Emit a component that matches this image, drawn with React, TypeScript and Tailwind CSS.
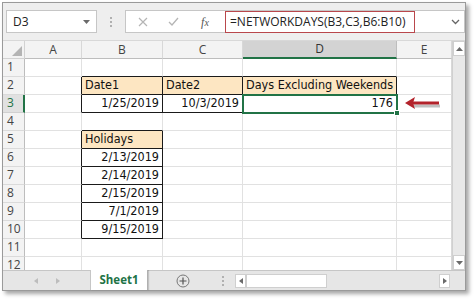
import React from "react";

const ui = { fontFamily: '"Open Sans", "Noto Sans", sans-serif' };
const cellFont = { fontFamily: '"DejaVu Sans Condensed", "DejaVu Sans", sans-serif' };

type Cell = {
  text?: string;
  align?: "left" | "right";
  fill?: boolean;
  r?: boolean; // black right border
  b?: boolean; // black bottom border
};

const rowsData: Record<number, Record<string, Cell>> = {
  1: { B: { b: true }, C: { b: true }, D: { b: true } },
  2: {
    A: { r: true },
    B: { text: "Date1", fill: true, r: true, b: true },
    C: { text: "Date2", fill: true, r: true, b: true },
    D: { text: "Days Excluding Weekends", fill: true, r: true, b: true },
  },
  3: {
    A: { r: true },
    B: { text: "1/25/2019", align: "right", r: true, b: true },
    C: { text: "10/3/2019", align: "right", r: true, b: true },
    D: { text: "176", align: "right", r: true, b: true },
  },
  4: { B: { b: true } },
  5: { A: { r: true }, B: { text: "Holidays", fill: true, r: true, b: true } },
  6: { A: { r: true }, B: { text: "2/13/2019", align: "right", r: true, b: true } },
  7: { A: { r: true }, B: { text: "2/14/2019", align: "right", r: true, b: true } },
  8: { A: { r: true }, B: { text: "2/15/2019", align: "right", r: true, b: true } },
  9: { A: { r: true }, B: { text: "7/1/2019", align: "right", r: true, b: true } },
  10: { A: { r: true }, B: { text: "9/15/2019", align: "right", r: true, b: true } },
};

const cols = ["A", "B", "C", "D", "E"];

function DataCell({ c, last }: { c: Cell; last?: boolean }) {
  return (
    <div
      className={`h-[18px] border-b border-r px-[3px] flex items-center overflow-visible whitespace-nowrap text-[12.5px] leading-none text-[#111] ${
        c.fill ? "bg-[#fde6c2]" : "bg-white"
      } ${c.r ? "border-r-[#1a1a1a]" : last ? "border-r-[#d8d8d8]" : "border-r-[#e1e1e1]"} ${
        c.b ? "border-b-[#1a1a1a]" : "border-b-[#e1e1e1]"
      } ${c.align === "right" ? "justify-end" : "justify-start"}`}
      style={cellFont}
    >
      {c.text}
    </div>
  );
}

export default function App() {
  const rows = Array.from({ length: 12 }, (_, i) => i + 1);
  return (
    <div className="w-[474px] h-[300px] bg-white overflow-hidden relative" style={ui}>
      <div className="absolute left-[2px] top-[2px] w-[464px] h-[289px] border border-[#9a9a9a] bg-[#f0f0f0] flex flex-col shadow-[3px_3px_4px_rgba(0,0,0,0.35)]">
        {/* Formula bar */}
        <div className="h-[38px] flex items-start pt-[7px] bg-[#eeeeee] border-b border-[#d8d8d8]">
          <div className="ml-[3px] w-[91px] h-[23px] bg-white border border-[#c6c6c6] flex items-center justify-between pl-[6px] pr-[6px]">
            <span className="text-[12px] text-[#222]">D3</span>
            <svg width="7" height="4" viewBox="0 0 7 4">
              <path d="M0 0 L7 0 L3.5 4 Z" fill="#6a6a6a" />
            </svg>
          </div>
          <div className="w-[28px] h-[23px] flex flex-col items-center justify-center gap-[2px]">
            <div className="w-[2px] h-[2px] bg-[#b0b0b0]" />
            <div className="w-[2px] h-[2px] bg-[#b0b0b0]" />
            <div className="w-[2px] h-[2px] bg-[#b0b0b0]" />
          </div>
          <div className="flex-1 h-[23px] bg-white border border-[#c6c6c6] flex items-center mr-[0px]">
            <div className="w-[33px] flex justify-center">
              <svg width="10" height="10" viewBox="0 0 10 10">
                <path d="M1 1 L9 9 M9 1 L1 9" stroke="#b5b5b5" strokeWidth="1.2" />
              </svg>
            </div>
            <div className="w-[28px] flex justify-center">
              <svg width="11" height="9" viewBox="0 0 11 9">
                <path d="M1 5 L4 8 L10 1" stroke="#b5b5b5" strokeWidth="1.3" fill="none" />
              </svg>
            </div>
            <div className="w-[36px] flex justify-center">
              <span className="text-[12px] italic text-[#555]" style={{ fontFamily: '"Liberation Serif", serif' }}>
                f<span className="text-[10px]">x</span>
              </span>
            </div>
            <div className="ml-[2px] w-[190px] h-[22px] border-[1.5px] border-[#b9474c] flex items-center pl-[4px]">
              <span className="text-[12px] text-[#222] whitespace-nowrap">=NETWORKDAYS(B3,C3,B6:B10)</span>
            </div>
            <div className="flex-1 flex justify-end pr-[4px]">
              <svg width="9" height="6" viewBox="0 0 9 6">
                <path d="M1 1 L4.5 4.5 L8 1" stroke="#666" strokeWidth="1.3" fill="none" />
              </svg>
            </div>
          </div>
        </div>

        {/* Grid + vertical scrollbar */}
        <div className="h-[229px] flex overflow-hidden">
          <div className="relative overflow-hidden">
            <div className="grid grid-cols-[22px_57px_81px_80px_154px_55px] auto-rows-[18px]">
              {/* header row */}
              <div className="h-[18px] bg-[#f3f3f3] border-r border-b border-[#d2d2d2] flex items-end justify-end pr-[2px] pb-[2px]">
                <svg width="10" height="10" viewBox="0 0 10 10">
                  <path d="M10 0 L10 10 L0 10 Z" fill="#b4b4b4" />
                </svg>
              </div>
              {cols.map((c) => (
                <div
                  key={c}
                  className={`h-[18px] flex items-center justify-center text-[12px] border-r border-b ${
                    c === "D"
                      ? "bg-[#d3d3d3] text-[#333] border-r-[#bdbdbd] border-b-[2px] border-b-[#217346]"
                      : "bg-[#f3f3f3] text-[#444] border-r-[#d8d8d8] border-b-[#bdbdbd]"
                  }`}
                >
                  {c}
                </div>
              ))}
              {rows.map((r) => (
                <React.Fragment key={r}>
                  <div
                    className={`h-[18px] flex items-start pl-[4px] text-[12px] leading-[15px] border-b ${
                      r === 3
                        ? "bg-[#e1e1e1] text-[#217346] border-r-[2px] border-r-[#217346] border-b-[#d0d0d0]"
                        : "bg-[#f3f3f3] text-[#444] border-r border-r-[#bdbdbd] border-b-[#dadada]"
                    }`}
                  >
                    {r}
                  </div>
                  {cols.map((c, i) => (
                    <DataCell key={c} c={(rowsData[r] && rowsData[r][c]) || {}} last={i === 4} />
                  ))}
                </React.Fragment>
              ))}
            </div>
            {/* selection D3 */}
            <div className="absolute left-[239px] top-[53px] w-[156px] h-[20px] border-[2px] border-[#217346] pointer-events-none" />
            <div className="absolute left-[391px] top-[69px] w-[6px] h-[6px] bg-[#217346] border border-white pointer-events-none" />
          </div>
          {/* vertical scrollbar */}
          <div className="w-[13px] bg-[#e8e8e8] border-l border-[#d0d0d0] flex flex-col justify-between">
            <div className="h-[15px] bg-white border border-[#cfcfcf] flex items-center justify-center">
              <svg width="7" height="4" viewBox="0 0 7 4">
                <path d="M0 4 L7 4 L3.5 0 Z" fill="#6a6a6a" />
              </svg>
            </div>
            <div className="h-[15px] bg-white border border-[#cfcfcf] flex items-center justify-center">
              <svg width="7" height="4" viewBox="0 0 7 4">
                <path d="M0 0 L7 0 L3.5 4 Z" fill="#6a6a6a" />
              </svg>
            </div>
          </div>
        </div>

        {/* Tab bar */}
        <div className="flex-1 flex items-stretch bg-[#e6e6e6] border-t border-[#c6c6c6]">
          <div className="w-[88px] flex items-center justify-center gap-[18px] border-r border-[#c6c6c6]">
            <svg width="4" height="6" viewBox="0 0 4 6"><path d="M4 0 L4 6 L0 3 Z" fill="#bdbdbd" /></svg>
            <svg width="4" height="6" viewBox="0 0 4 6"><path d="M0 0 L0 6 L4 3 Z" fill="#bdbdbd" /></svg>
          </div>
          <div className="w-[57px] -mt-[1px] bg-white border-r border-[#b0b0b0] flex items-center justify-center shadow-[1px_0_1px_rgba(0,0,0,0.15)]">
            <span className="text-[11.5px] font-bold text-[#217346]">Sheet1</span>
          </div>
          <div className="w-[70px] flex items-center justify-center">
            <svg width="14" height="14" viewBox="0 0 14 14">
              <circle cx="7" cy="7" r="6" fill="none" stroke="#777" strokeWidth="1" />
              <path d="M7 3.5 V10.5 M3.5 7 H10.5" stroke="#555" strokeWidth="1.2" />
            </svg>
          </div>
          <div className="flex-1 flex items-center">
            <div className="w-[10px] flex flex-col items-center gap-[2px]">
              <div className="w-[2px] h-[2px] bg-[#b0b0b0]" />
              <div className="w-[2px] h-[2px] bg-[#b0b0b0]" />
              <div className="w-[2px] h-[2px] bg-[#b0b0b0]" />
            </div>
            <div className="ml-[7px] flex-1 h-[14px] flex items-stretch mr-[15px]">
              <div className="w-[11px] bg-white border border-[#cfcfcf] flex items-center justify-center">
                <svg width="4" height="6" viewBox="0 0 4 6"><path d="M4 0 L4 6 L0 3 Z" fill="#6a6a6a" /></svg>
              </div>
              <div className="w-[81px] bg-white border border-[#cfcfcf]" />
              <div className="flex-1" />
              <div className="w-[11px] bg-white border border-[#cfcfcf] flex items-center justify-center">
                <svg width="4" height="6" viewBox="0 0 4 6"><path d="M0 0 L0 6 L4 3 Z" fill="#6a6a6a" /></svg>
              </div>
            </div>
          </div>
        </div>
      </div>

      {/* red arrow */}
      <svg className="absolute left-[403px] top-[96px]" width="40" height="16" viewBox="0 0 40 16">
        <path d="M36 8.5 L9 8.5" stroke="#00000040" strokeWidth="3" transform="translate(1,1.5)" />
        <path d="M36 7 L9 7" stroke="#b3232b" strokeWidth="3" />
        <path d="M2 7 L12 1 L10 7 L12 13 Z" fill="#b3232b" />
      </svg>
    </div>
  );
}
